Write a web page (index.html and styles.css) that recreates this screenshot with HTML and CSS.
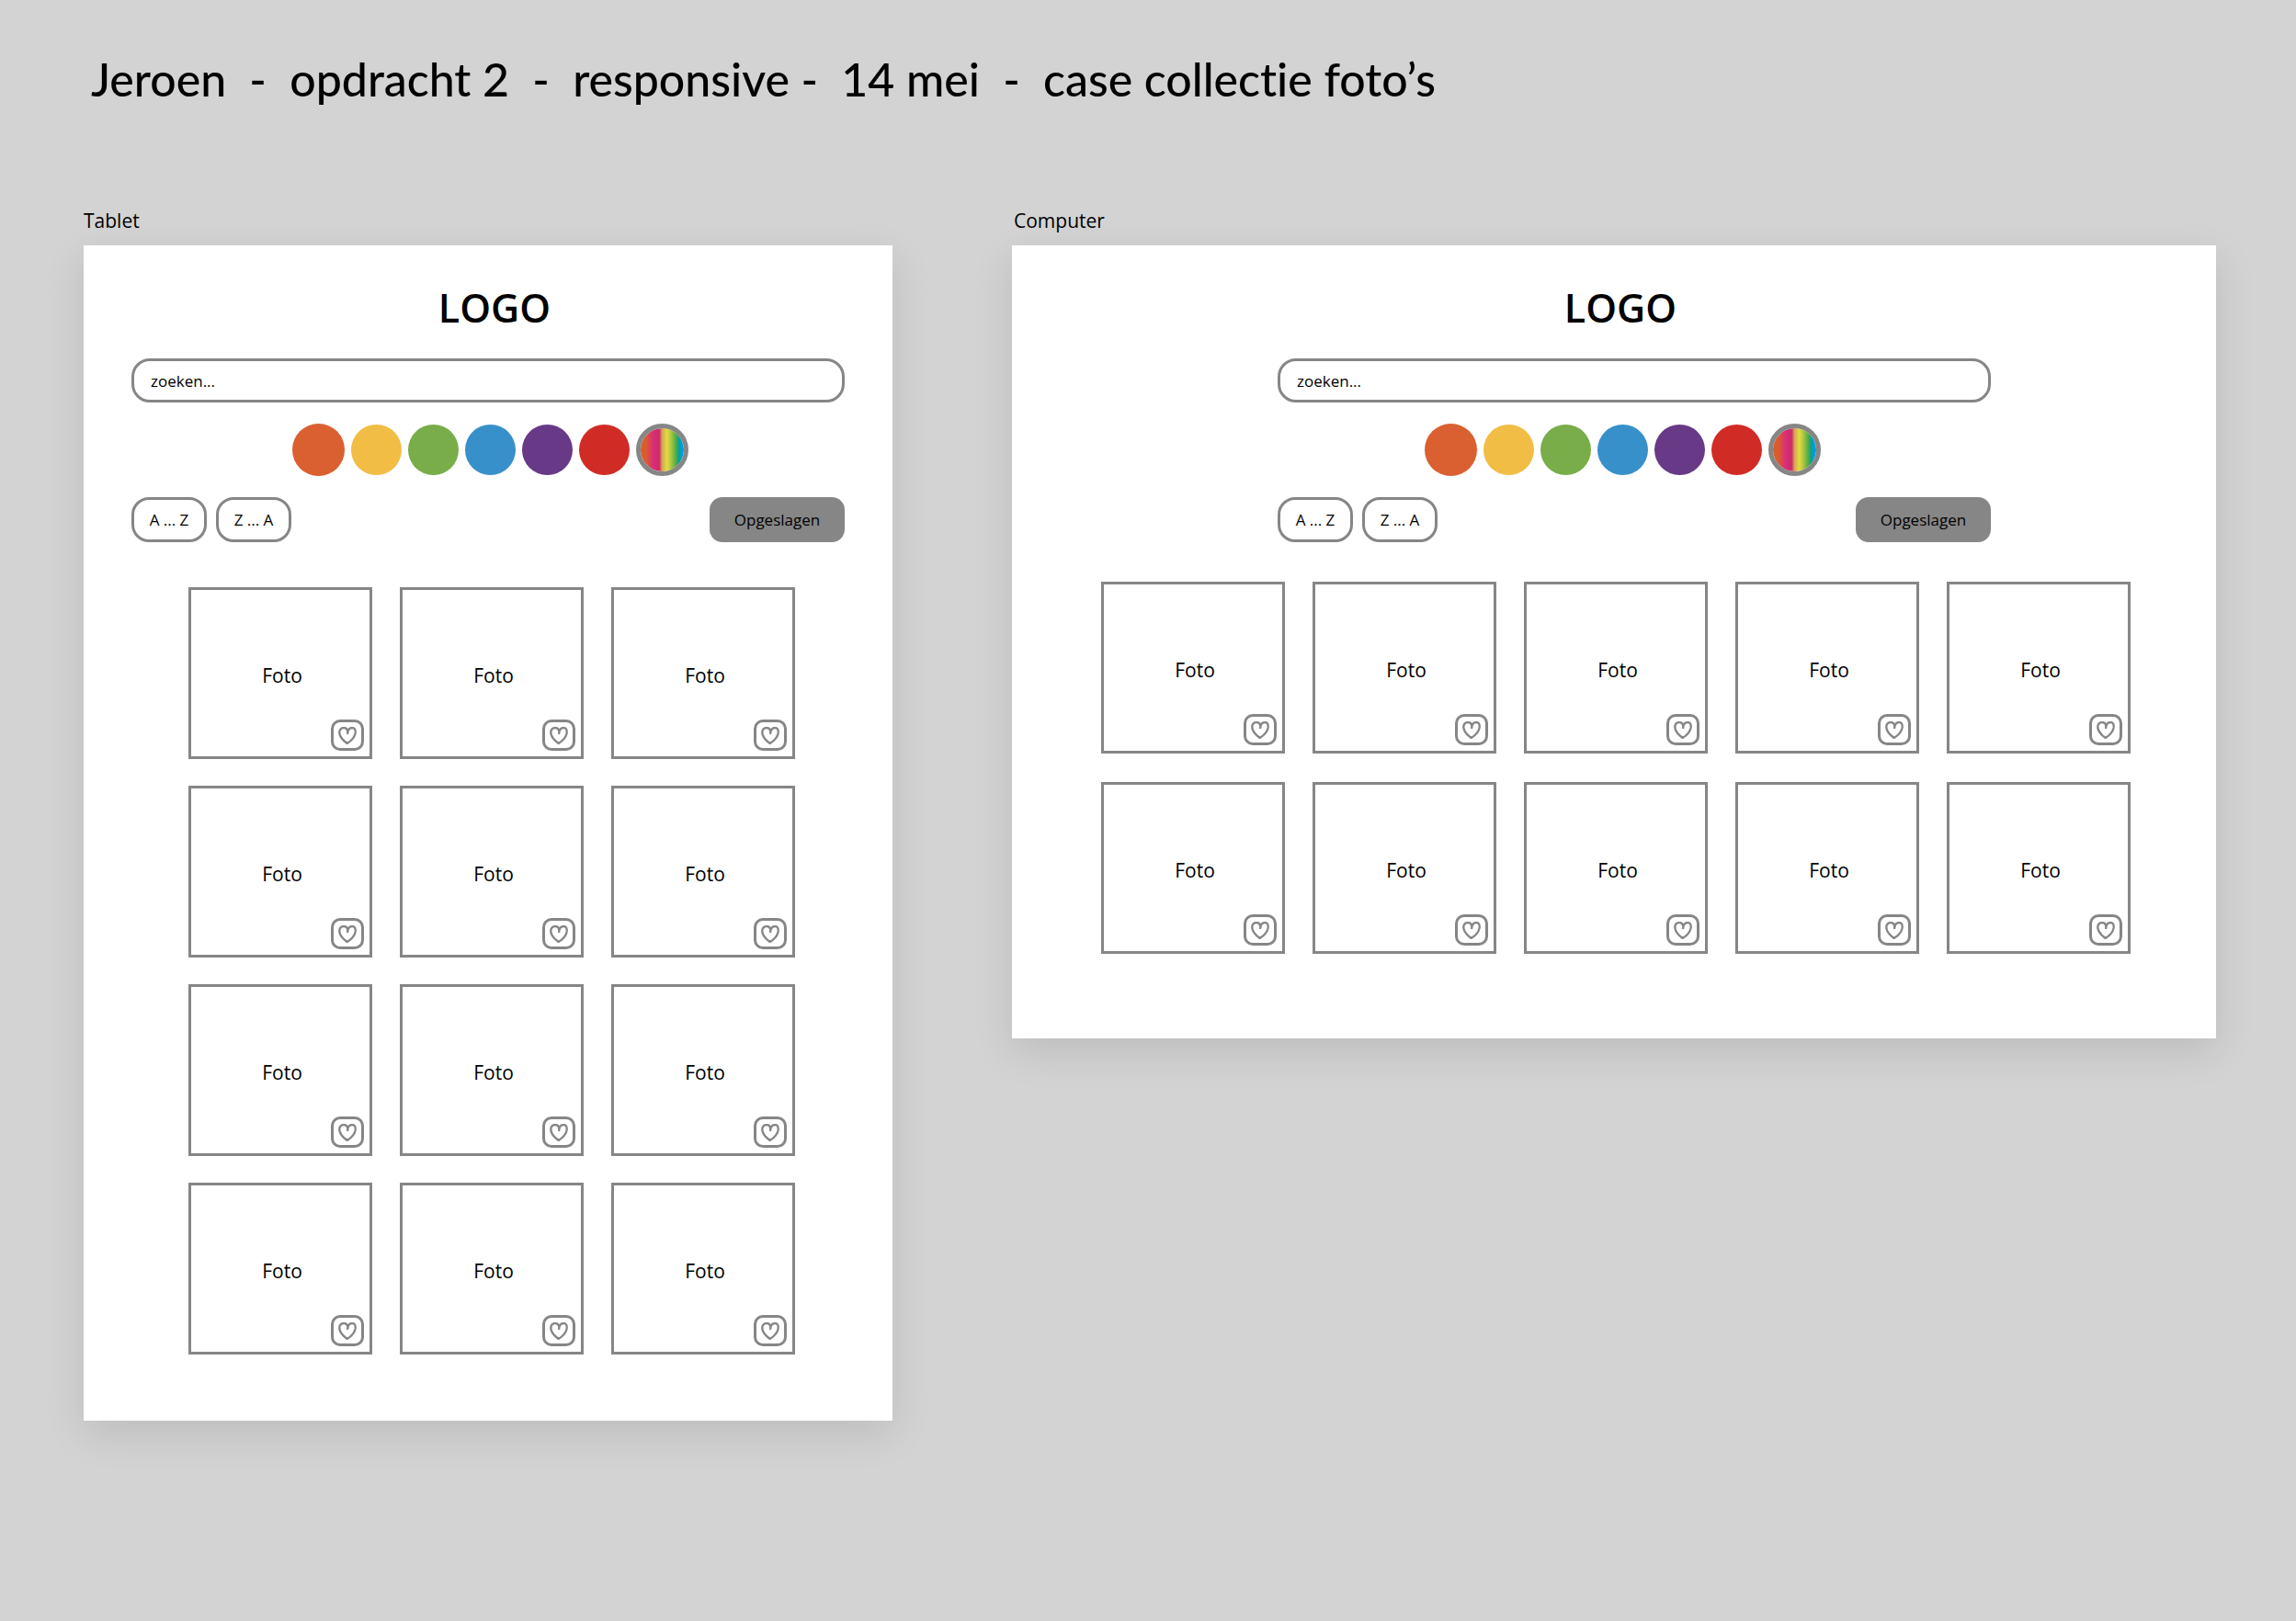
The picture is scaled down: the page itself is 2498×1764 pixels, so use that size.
FILE: index.html
```
<!DOCTYPE html>
<html lang="nl">
<head>
<meta charset="utf-8">
<meta name="viewport" content="width=device-width, initial-scale=1">
<title>Case collectie foto’s</title>
<link rel="stylesheet" href="styles.css">
</head>
<body>
<svg class="sprite" aria-hidden="true">
  <symbol id="heart" viewBox="0 0 60 57">
    <path d="M31 18C31 8 26 3 18 3C8 3 3 11 4 21C6 36 18 46 29 54C42 46 54 34 56 20C57 9 53 3 46 3C38 3 32 8 31 18L30 24"/>
  </symbol>
</svg>
<h1 class="title">Jeroen  -  opdracht 2  -  responsive -  14 mei  -  case collectie foto’s</h1>
<main class="boards">
  <section class="board tablet">
    <h2 class="board-name">Tablet</h2>
    <div class="screen">
      <p class="logo">LOGO</p>
      <div class="controls">
        <input class="search" type="search" placeholder="zoeken..." aria-label="Zoeken">
      </div>
      <div class="swatches">
        <button class="swatch orange" aria-label="Oranje"></button>
        <button class="swatch yellow" aria-label="Geel"></button>
        <button class="swatch green" aria-label="Groen"></button>
        <button class="swatch blue" aria-label="Blauw"></button>
        <button class="swatch purple" aria-label="Paars"></button>
        <button class="swatch red" aria-label="Rood"></button>
        <button class="swatch rainbow" aria-label="Alle kleuren"></button>
      </div>
      <div class="controls actions">
        <button class="sort">A ... Z</button>
        <button class="sort">Z ... A</button>
        <button class="saved">Opgeslagen</button>
      </div>
      <div class="photos">
        <article class="photo">Foto<button class="like" aria-label="Bewaar foto"><svg class="heart"><use href="#heart"/></svg></button></article>
        <article class="photo">Foto<button class="like" aria-label="Bewaar foto"><svg class="heart"><use href="#heart"/></svg></button></article>
        <article class="photo">Foto<button class="like" aria-label="Bewaar foto"><svg class="heart"><use href="#heart"/></svg></button></article>
        <article class="photo">Foto<button class="like" aria-label="Bewaar foto"><svg class="heart"><use href="#heart"/></svg></button></article>
        <article class="photo">Foto<button class="like" aria-label="Bewaar foto"><svg class="heart"><use href="#heart"/></svg></button></article>
        <article class="photo">Foto<button class="like" aria-label="Bewaar foto"><svg class="heart"><use href="#heart"/></svg></button></article>
        <article class="photo">Foto<button class="like" aria-label="Bewaar foto"><svg class="heart"><use href="#heart"/></svg></button></article>
        <article class="photo">Foto<button class="like" aria-label="Bewaar foto"><svg class="heart"><use href="#heart"/></svg></button></article>
        <article class="photo">Foto<button class="like" aria-label="Bewaar foto"><svg class="heart"><use href="#heart"/></svg></button></article>
        <article class="photo">Foto<button class="like" aria-label="Bewaar foto"><svg class="heart"><use href="#heart"/></svg></button></article>
        <article class="photo">Foto<button class="like" aria-label="Bewaar foto"><svg class="heart"><use href="#heart"/></svg></button></article>
        <article class="photo">Foto<button class="like" aria-label="Bewaar foto"><svg class="heart"><use href="#heart"/></svg></button></article>
      </div>
    </div>
  </section>
  <section class="board computer">
    <h2 class="board-name">Computer</h2>
    <div class="screen">
      <p class="logo">LOGO</p>
      <div class="controls">
        <input class="search" type="search" placeholder="zoeken..." aria-label="Zoeken">
      </div>
      <div class="swatches">
        <button class="swatch orange" aria-label="Oranje"></button>
        <button class="swatch yellow" aria-label="Geel"></button>
        <button class="swatch green" aria-label="Groen"></button>
        <button class="swatch blue" aria-label="Blauw"></button>
        <button class="swatch purple" aria-label="Paars"></button>
        <button class="swatch red" aria-label="Rood"></button>
        <button class="swatch rainbow" aria-label="Alle kleuren"></button>
      </div>
      <div class="controls actions">
        <button class="sort">A ... Z</button>
        <button class="sort">Z ... A</button>
        <button class="saved">Opgeslagen</button>
      </div>
      <div class="photos">
        <article class="photo">Foto<button class="like" aria-label="Bewaar foto"><svg class="heart"><use href="#heart"/></svg></button></article>
        <article class="photo">Foto<button class="like" aria-label="Bewaar foto"><svg class="heart"><use href="#heart"/></svg></button></article>
        <article class="photo">Foto<button class="like" aria-label="Bewaar foto"><svg class="heart"><use href="#heart"/></svg></button></article>
        <article class="photo">Foto<button class="like" aria-label="Bewaar foto"><svg class="heart"><use href="#heart"/></svg></button></article>
        <article class="photo">Foto<button class="like" aria-label="Bewaar foto"><svg class="heart"><use href="#heart"/></svg></button></article>
        <article class="photo">Foto<button class="like" aria-label="Bewaar foto"><svg class="heart"><use href="#heart"/></svg></button></article>
        <article class="photo">Foto<button class="like" aria-label="Bewaar foto"><svg class="heart"><use href="#heart"/></svg></button></article>
        <article class="photo">Foto<button class="like" aria-label="Bewaar foto"><svg class="heart"><use href="#heart"/></svg></button></article>
        <article class="photo">Foto<button class="like" aria-label="Bewaar foto"><svg class="heart"><use href="#heart"/></svg></button></article>
        <article class="photo">Foto<button class="like" aria-label="Bewaar foto"><svg class="heart"><use href="#heart"/></svg></button></article>
      </div>
    </div>
  </section>
</main>
</body>
</html>
```
FILE: styles.css
```
:root {
  --line: #868686;
}

* {
  box-sizing: border-box;
}

body {
  margin: 0;
  padding: 56px 87px 64px 91px;
  background: #d3d3d3;
  color: #000;
  font-family: "Open Sans", "Noto Sans", sans-serif;
  font-size: 21px;
  line-height: 30px;
}

button,
input {
  margin: 0;
  font: inherit;
  color: inherit;
}

button {
  padding: 0;
  border: 0;
  background: none;
  cursor: pointer;
}

.sprite {
  position: absolute;
  width: 0;
  height: 0;
}

.title {
  margin: 0 0 109px;
  padding-left: 8px;
  font-family: Lato, sans-serif;
  font-size: 50px;
  font-weight: 500;
  font-variant-ligatures: none;
  line-height: 60px;
  white-space: pre-wrap;
}

.boards {
  display: grid;
  grid-template-columns: 880fr 1310fr;
  column-gap: 130px;
  align-items: start;
}

.board-name {
  margin: 0 0 12px;
  font-size: 21px;
  font-weight: 400;
}

.computer .board-name {
  padding-left: 2px;
}

.screen {
  background: #fff;
  box-shadow: 0 14px 42px rgba(0, 0, 0, 0.11);
}

.tablet .screen {
  padding: 42px 0 72px;
}

.computer .screen {
  padding: 42px 0 92px;
}

.logo {
  margin: 0 0 29px;
  padding-left: 14px;
  font-size: 43px;
  font-weight: 600;
  line-height: 52px;
  text-align: center;
}

.controls {
  display: flex;
  align-items: center;
  width: 776px;
  max-width: 100%;
  margin: 0 auto;
}

.computer .controls {
  width: 820px;
  padding-left: 44px;
}

.search {
  width: 100%;
  height: 48px;
  padding: 0 18px;
  border: 3px solid var(--line);
  border-radius: 20px;
  background: #fff;
  font-size: 17px;
  appearance: none;
}

.search::placeholder {
  color: #000;
  opacity: 1;
}

.swatches {
  display: flex;
  justify-content: center;
  align-items: center;
  gap: 7px;
  margin: 23px 0;
  padding-left: 4px;
}

.computer .swatches {
  padding-left: 18px;
}

.swatch {
  width: 55px;
  height: 55px;
  border-radius: 50%;
}

.orange {
  width: 57px;
  height: 57px;
  background: #da6032;
}

.yellow {
  background: #f1bd44;
}

.green {
  background: #78ad4a;
}

.blue {
  background: #3890ca;
}

.purple {
  background: #673987;
}

.red {
  background: #d12b26;
}

.rainbow {
  width: 57px;
  height: 57px;
  border: 5px solid var(--line);
  background: linear-gradient(90deg, #da5b2c 13%, #d92b7c 30%, #cb2c62 43%, #d8a45a 50%, #e2dc3e 61%, #b3c93f 69%, #4fab48 82%, #00a19b 89%, #009ddc 94%) padding-box;
}

.actions {
  gap: 10px;
  font-size: 17px;
  line-height: 24px;
}

.sort {
  width: 82px;
  height: 49px;
  border: 3px solid var(--line);
  border-radius: 19px;
}

.saved {
  width: 147px;
  height: 49px;
  margin-left: auto;
  border-radius: 14px;
  background: var(--line);
}

.photos {
  display: grid;
  justify-content: center;
}

.tablet .photos {
  grid-template-columns: repeat(3, 200px);
  gap: 29px 30px;
  margin-top: 49px;
  padding-left: 8px;
}

.computer .photos {
  grid-template-columns: repeat(5, 200px);
  gap: 31px 30px;
  margin-top: 43px;
  padding-left: 4px;
}

.photo {
  position: relative;
  display: flex;
  justify-content: center;
  align-items: center;
  height: 187px;
  padding: 4px 0 0 4px;
  border: 3px solid var(--line);
}

.like {
  position: absolute;
  right: 6px;
  bottom: 6px;
  display: grid;
  place-items: center;
  width: 36px;
  height: 34px;
  border: 3px solid var(--line);
  border-radius: 10px;
}

.heart {
  width: 20px;
  height: 19px;
  fill: none;
  stroke: var(--line);
  stroke-width: 7px;
  stroke-linejoin: round;
}
```
